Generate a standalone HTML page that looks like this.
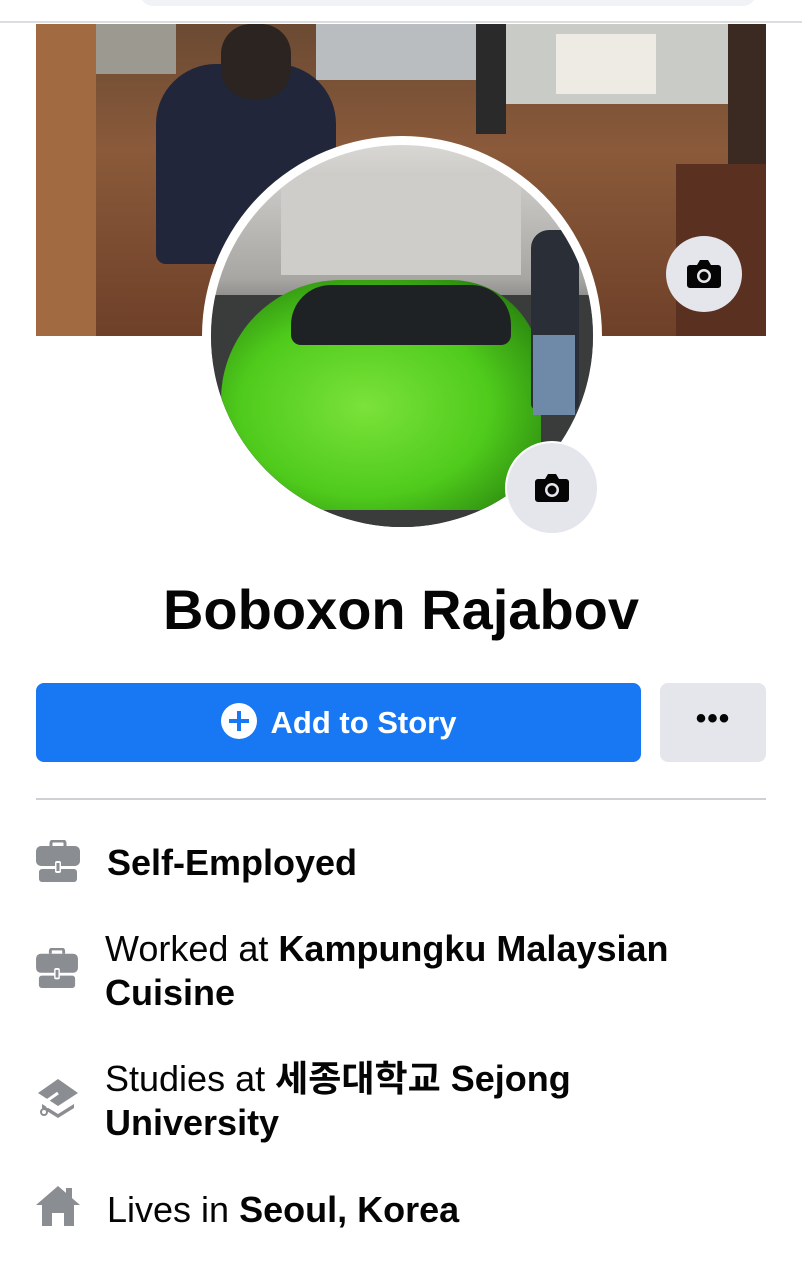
<!DOCTYPE html>
<html><head><meta charset="utf-8"><style>
body{margin:0;width:802px;height:1280px;background:#fff;position:relative;overflow:hidden;font-family:"Liberation Sans","Noto Sans CJK KR",sans-serif;color:#050505}
.a{position:absolute}
.row{position:absolute;left:105px;font-size:36px;line-height:44px}
.ic{position:absolute;left:36px}
b{font-weight:bold}
</style></head><body>
<div class="a" style="left:140px;top:-20px;width:616px;height:26px;background:#f0f2f5;border-radius:14px"></div>
<div class="a" style="left:0;top:21px;width:802px;height:2px;background:#dcdde0"></div>
<div class="a" style="left:36px;top:24px;width:730px;height:312px;overflow:hidden;background:linear-gradient(180deg,#6b4a33 0%,#8a5a3a 40%,#6e4028 100%)">
 <div class="a" style="left:280px;top:0;width:160px;height:56px;background:#b9bdbf"></div>
 <div class="a" style="left:470px;top:0;width:222px;height:80px;background:#c9cbc7"></div>
 <div class="a" style="left:520px;top:10px;width:100px;height:60px;background:#eeeae4"></div>
 <div class="a" style="left:60px;top:0;width:80px;height:50px;background:#9c9a90"></div>
 <div class="a" style="left:440px;top:0;width:30px;height:110px;background:#2a2a2a"></div>
 <div class="a" style="left:692px;top:0;width:38px;height:312px;background:#3a2a22"></div>
 <div class="a" style="left:120px;top:40px;width:180px;height:200px;background:#22263a;border-radius:60px 60px 10px 10px"></div>
 <div class="a" style="left:185px;top:0;width:70px;height:75px;background:#2b2420;border-radius:30px"></div>
 <div class="a" style="left:0;top:0;width:60px;height:312px;background:#a26a40"></div>
 <div class="a" style="left:640px;top:140px;width:90px;height:172px;background:#5a3020"></div>
</div>
<div class="a" style="left:666px;top:236px;width:76px;height:76px;border-radius:50%;background:#e4e6eb"></div>
<svg class="a" style="left:686px;top:257px" width="36" height="34" viewBox="0 0 36 34"><path d="M4 8h7l3-5h8l3 5h7a3 3 0 0 1 3 3v17a3 3 0 0 1-3 3H4a3 3 0 0 1-3-3V11a3 3 0 0 1 3-3z" fill="#050505"/><circle cx="18" cy="19" r="7" fill="#e4e6eb"/><circle cx="18" cy="19" r="4.5" fill="#050505"/></svg>
<div class="a" style="left:202px;top:136px;width:400px;height:400px;border-radius:50%;background:#fff"></div>
<div class="a" style="left:211px;top:145px;width:382px;height:382px;border-radius:50%;overflow:hidden;background:linear-gradient(180deg,#d9d7d4 0%,#a8a6a3 35%,#5a5d5e 50%,#2f3230 100%)">
 <div class="a" style="left:70px;top:30px;width:240px;height:100px;background:#cfcdc9"></div>
 <div class="a" style="left:0;top:150px;width:382px;height:232px;background:#3a3c3c"></div>
 <div class="a" style="left:10px;top:135px;width:320px;height:230px;background:radial-gradient(ellipse at 45% 55%,#7be23a 0%,#4fcb1c 50%,#2f8f10 80%,#1c3a10 100%);border-radius:120px 90px 40px 30px"></div>
 <div class="a" style="left:80px;top:140px;width:220px;height:60px;background:#1e2224;border-radius:40px 40px 10px 10px"></div>
 <div class="a" style="left:320px;top:85px;width:48px;height:180px;background:#2a2e36;border-radius:18px 18px 6px 6px"></div>
 <div class="a" style="left:322px;top:190px;width:42px;height:80px;background:#6e8aa8"></div>
</div>
<div class="a" style="left:505px;top:441px;width:94px;height:94px;border-radius:50%;background:#e4e6eb;border:2px solid #fff;box-sizing:border-box"></div>
<svg class="a" style="left:534px;top:471px" width="36" height="34" viewBox="0 0 36 34"><path d="M4 8h7l3-5h8l3 5h7a3 3 0 0 1 3 3v17a3 3 0 0 1-3 3H4a3 3 0 0 1-3-3V11a3 3 0 0 1 3-3z" fill="#050505"/><circle cx="18" cy="19" r="7" fill="#e4e6eb"/><circle cx="18" cy="19" r="4.5" fill="#050505"/></svg>
<div class="a" style="left:0;width:802px;top:574px;text-align:center;font-size:56px;line-height:72px;font-weight:bold">Boboxon Rajabov</div>
<div class="a" style="left:36px;top:683px;width:605px;height:79px;background:#1877f2;border-radius:8px;color:#fff;font-size:31px;font-weight:bold;line-height:79px;text-align:center">
 <span style="display:inline-block;width:36px;height:36px;border-radius:50%;background:#fff;vertical-align:-6px;margin-right:14px;position:relative"><span class="a" style="left:8px;top:16px;width:20px;height:4px;background:#1877f2"></span><span class="a" style="left:16px;top:8px;width:4px;height:20px;background:#1877f2"></span></span>Add to Story</div>
<div class="a" style="left:660px;top:683px;width:106px;height:79px;background:#e4e6eb;border-radius:8px;text-align:center;line-height:72px;font-size:30px;font-weight:bold;letter-spacing:1px">•••</div>
<div class="a" style="left:36px;top:798px;width:730px;height:2px;background:#ced0d4"></div>
<svg class="ic" style="top:840px" width="44" height="42" viewBox="0 0 44 42"><path d="M15 6V3a2 2 0 0 1 2-2h10a2 2 0 0 1 2 2v3" stroke="#8a8d91" stroke-width="3" fill="none"/><rect x="0" y="6" width="44" height="20" rx="5" fill="#8a8d91"/><rect x="3" y="29" width="38" height="13" rx="3" fill="#8a8d91"/><rect x="19" y="21" width="6" height="12" rx="2" fill="#fff"/><rect x="20.5" y="23" width="3" height="8" fill="#8a8d91"/></svg>
<div class="row" style="top:841px;left:107px"><b>Self-Employed</b></div>
<svg class="ic" style="top:948px" width="42" height="40" viewBox="0 0 44 42"><path d="M15 6V3a2 2 0 0 1 2-2h10a2 2 0 0 1 2 2v3" stroke="#8a8d91" stroke-width="3" fill="none"/><rect x="0" y="6" width="44" height="20" rx="5" fill="#8a8d91"/><rect x="3" y="29" width="38" height="13" rx="3" fill="#8a8d91"/><rect x="19" y="21" width="6" height="12" rx="2" fill="#fff"/><rect x="20.5" y="23" width="3" height="8" fill="#8a8d91"/></svg>
<div class="row" style="top:927px">Worked at <b>Kampungku Malaysian<br>Cuisine</b></div>
<svg class="ic" style="top:1078px" width="44" height="42" viewBox="0 0 44 42"><path d="M22 1L42 15 22 28 2 15z" fill="#8a8d91"/><path d="M6 26l16 10 16-10v4L22 40 6 30z" fill="#8a8d91"/><path d="M22 15 L12 22 V30" stroke="#fff" stroke-width="3" fill="none"/><circle cx="8" cy="34" r="3" stroke="#8a8d91" stroke-width="2" fill="#fff"/></svg>
<div class="row" style="top:1057px">Studies at <b>세종대학교 Sejong<br>University</b></div>
<svg class="ic" style="top:1185px" width="44" height="42" viewBox="0 0 44 42"><path d="M22 1L44 20H38V41H28V28H16V41H6V20H0z" fill="#8a8d91"/><rect x="30" y="3" width="6" height="10" fill="#8a8d91"/></svg>
<div class="row" style="top:1188px;left:107px">Lives in <b>Seoul, Korea</b></div>
</body></html>
